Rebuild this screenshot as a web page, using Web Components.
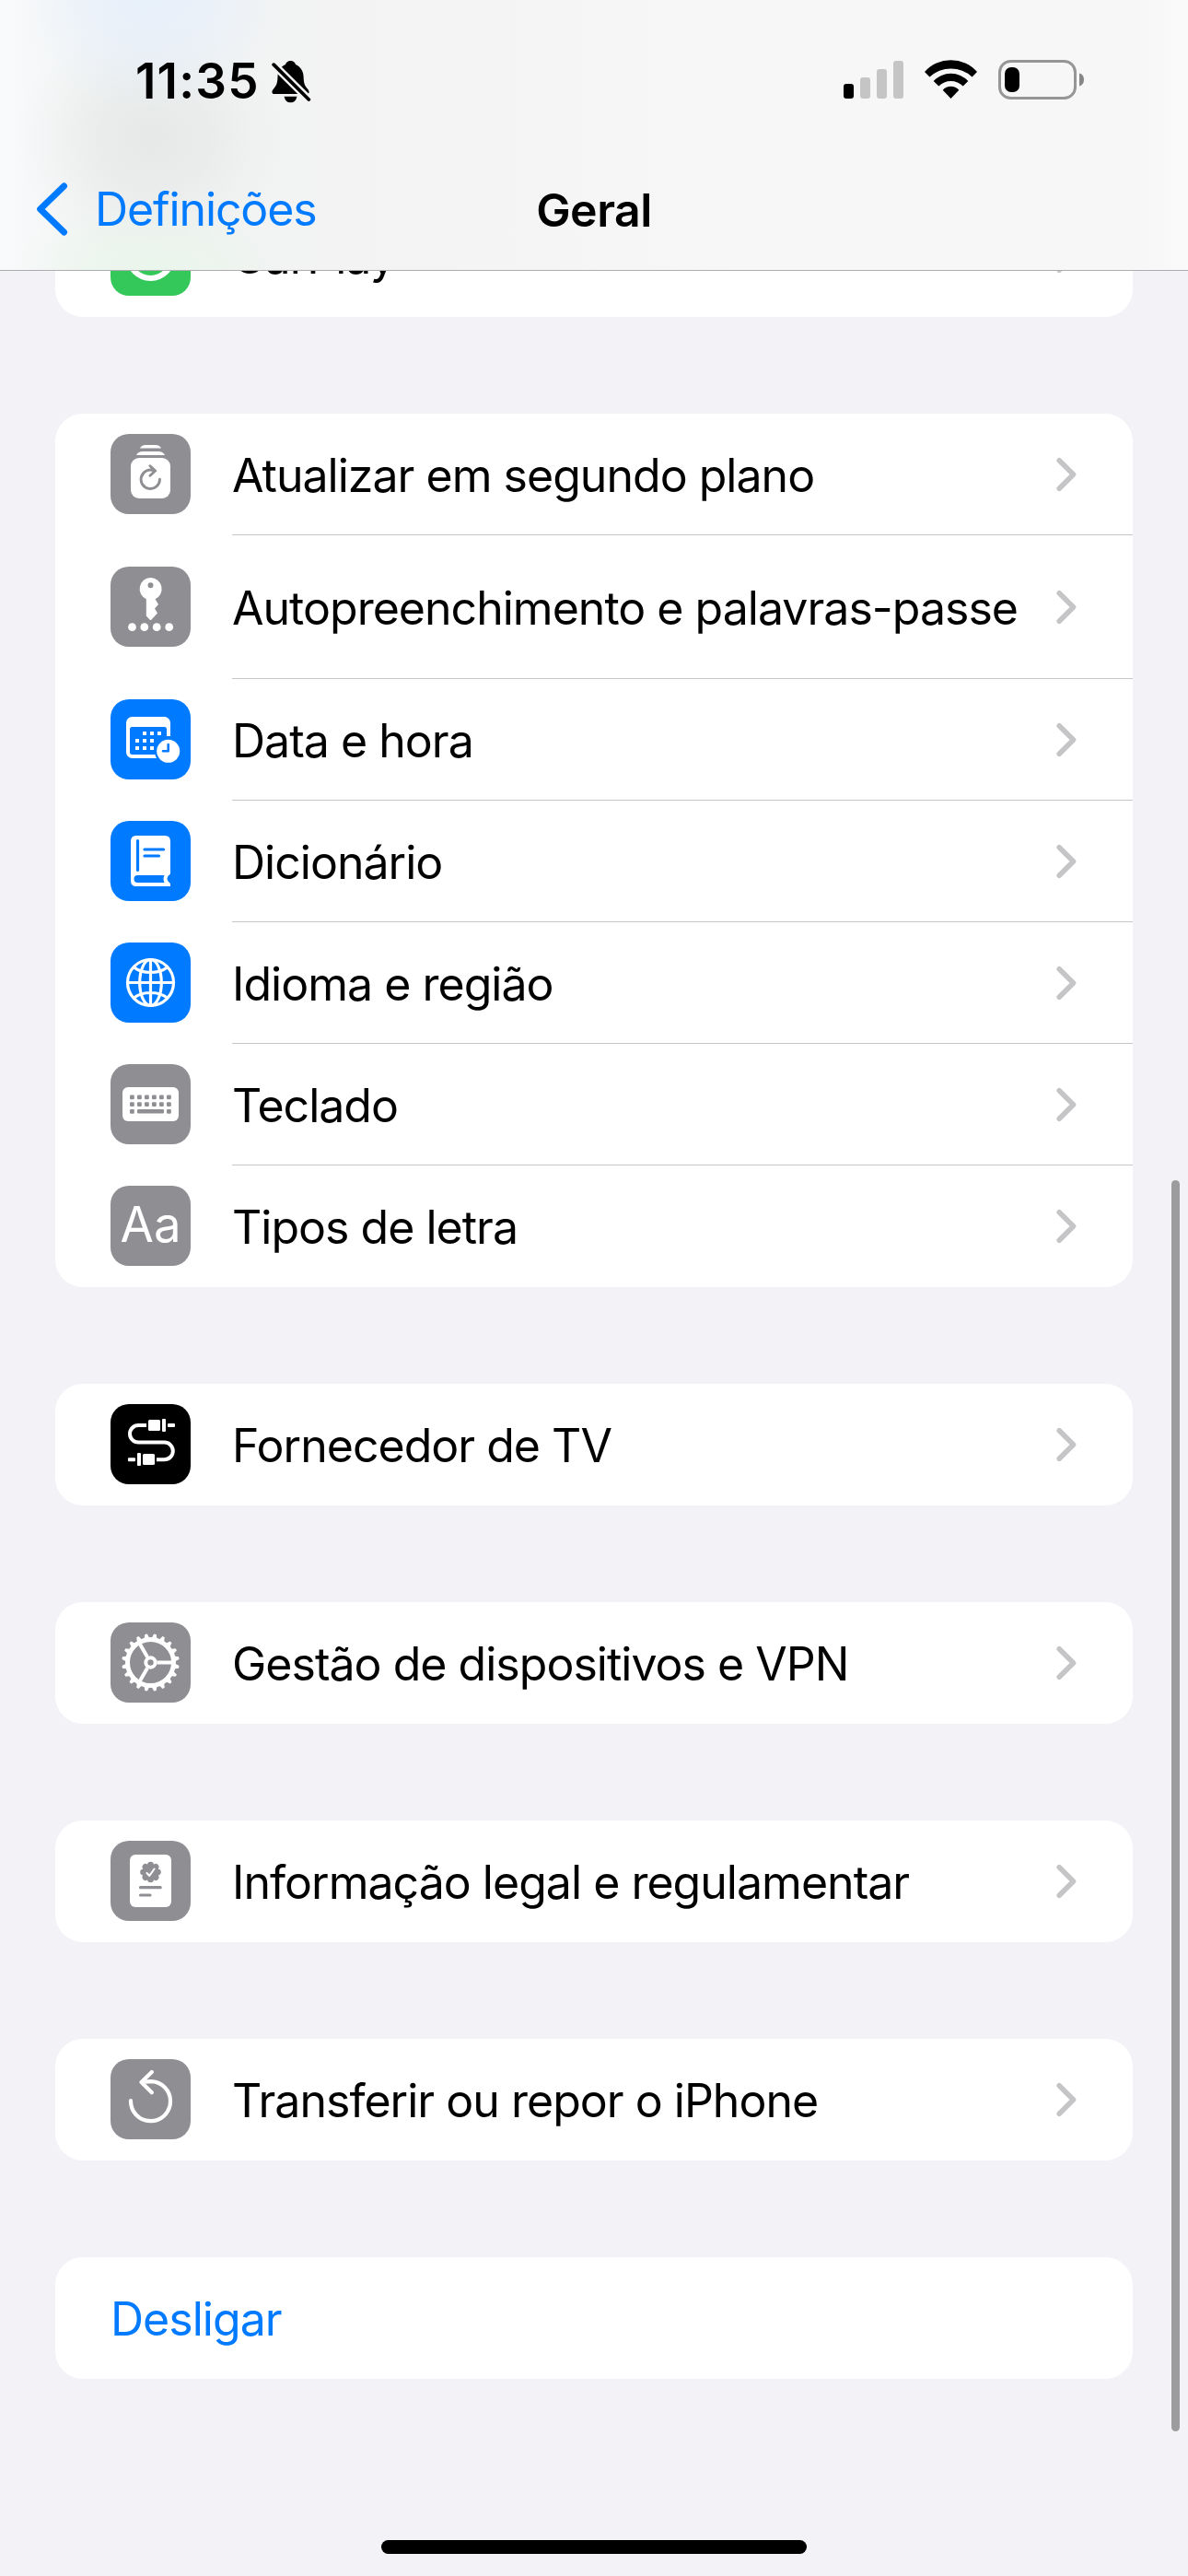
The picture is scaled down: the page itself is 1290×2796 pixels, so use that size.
<!DOCTYPE html>
<html lang="pt">
<head>
<meta charset="utf-8">
<meta name="viewport" content="width=device-width, initial-scale=1">
<title>Geral</title>
<style>
    html, body {
        margin: 0;
        padding: 0;
    }
    body {
        width: 1290px;
        height: 2796px;
        overflow: hidden;
        background: #f2f2f7;
        color: #000;
        font-family: Inter, "Liberation Sans", sans-serif;
        font-size: 50px;
    }
</style>
</head>
<body>
<settings-page>
    <status-bar slot="header" time="11:35"></status-bar>
    <nav-bar slot="header" back="Definições">Geral</nav-bar>

    <settings-group>
        <settings-row icon="carplay" color="#34c759">CarPlay</settings-row>
    </settings-group>
    <settings-group>
        <settings-row icon="refresh">Atualizar em segundo plano</settings-row>
        <settings-row icon="key" class="tall">Autopreenchimento e palavras-passe</settings-row>
        <settings-row icon="calendar" color="#007aff">Data e hora</settings-row>
        <settings-row icon="book" color="#007aff">Dicionário</settings-row>
        <settings-row icon="globe" color="#007aff">Idioma e região</settings-row>
        <settings-row icon="keyboard">Teclado</settings-row>
        <settings-row icon="fonts">Tipos de letra</settings-row>
    </settings-group>
    <settings-group>
        <settings-row icon="cable" color="#000">Fornecedor de TV</settings-row>
    </settings-group>
    <settings-group>
        <settings-row icon="gear">Gestão de dispositivos e VPN</settings-row>
    </settings-group>
    <settings-group>
        <settings-row icon="legal">Informação legal e regulamentar</settings-row>
    </settings-group>
    <settings-group>
        <settings-row icon="reset">Transferir ou repor o iPhone</settings-row>
    </settings-group>
    <settings-group>
        <settings-row class="action">Desligar</settings-row>
    </settings-group>
</settings-page>

<script>
// icon glyphs, all drawn on an 87x87 tile
const icons = {
    carplay: `<circle cx="43.5" cy="44" r="24" fill="none" stroke="#fff" stroke-width="6"/>
        <circle cx="43.5" cy="44" r="18" fill="#34c759"/>`,
    refresh: `<g fill="#fff">
        <path d="M32 15.5Q33.5 12 38 12H49Q53.5 12 55 15.5Z"/>
        <path d="M28 23Q30 19 35 19H52Q57 19 59 23Z"/>
        <rect x="22" y="26" width="43" height="44" rx="9"/></g>
        <path d="M53.5 49.200A10.200 10.200 0 1 1 47.500 40M43 34.800L48.500 40L43 45.200" fill="none" stroke="#8e8e93" stroke-width="2.900" stroke-linecap="round" stroke-linejoin="miter"/>`,
    key: `<path fill="#fff" fill-rule="evenodd" d="M43.500 12A12.200 12.200 0 0 1 48.500 35.300L52 41L48 45.500L51 50.500L44.500 57.500Q43.500 58.700 42.500 57.500L38.800 53.500V35.300A12.200 12.200 0 0 1 43.500 12ZM43.500 17.200A3 3 0 1 0 43.500 23.200A3 3 0 1 0 43.500 17.200Z"/>
        <g fill="#fff"><circle cx="23.500" cy="65.700" r="4.400"/><circle cx="36.800" cy="65.700" r="4.400"/><circle cx="50.200" cy="65.700" r="4.400"/><circle cx="63.700" cy="65.700" r="4.400"/></g>`,
    calendar: `<rect x="17" y="19" width="48" height="45" rx="6.500" fill="#fff"/>
        <path d="M21 32.500Q21 30 23.500 30H58.500Q61 30 61 32.500V60H23.500Q21 60 21 57.500Z" fill="#007aff"/>
        <g fill="#fff"><rect x="35" y="35" width="4" height="4" rx=".6"/><rect x="43" y="35" width="4" height="4" rx=".6"/><rect x="51" y="35" width="4" height="4" rx=".6"/>
        <rect x="27" y="43" width="4" height="4" rx=".6"/><rect x="35" y="43" width="4" height="4" rx=".6"/><rect x="43" y="43" width="4" height="4" rx=".6"/>
        <rect x="27" y="51" width="4" height="4" rx=".6"/><rect x="35" y="51" width="4" height="4" rx=".6"/><rect x="43" y="51" width="4" height="4" rx=".6"/></g>
        <rect x="60" y="40" width="6" height="14" fill="#007aff"/>
        <circle cx="62.700" cy="56.300" r="14.800" fill="#007aff"/><circle cx="62.700" cy="56.300" r="12.500" fill="#fff"/>
        <path d="M62.700 49V56.300H57" fill="none" stroke="#007aff" stroke-width="2.600" stroke-linecap="round" stroke-linejoin="round"/>`,
    book: `<path fill="#fff" d="M28 16H59Q65 16 65 22V57.500Q61.500 60 61.500 62.500Q61.500 65 65 68V71H28Q22 71 22 65V22Q22 16 28 16Z"/>
        <path d="M29.500 59H58.500Q56.500 63 58.500 67H29.500A4 4 0 0 1 29.500 59Z" fill="#007aff"/>
        <path d="M29.500 21.500V53.500M37 31H57.500M37 38H52.500" stroke="#007aff" stroke-width="3.200" stroke-linecap="round"/>`,
    globe: `<g fill="none" stroke="#fff" stroke-width="3.200"><circle cx="43.500" cy="43.500" r="25"/>
        <ellipse cx="43.500" cy="43.500" rx="11.800" ry="25"/><path d="M43.500 18.500V68.500M18.500 43.500H68.500M25.500 27Q32.500 32.500 43.500 32.500T61.500 27M25.500 60Q32.500 54.500 43.500 54.500T61.500 60"/></g>`,
    keyboard: `<rect x="13" y="25" width="61" height="37" rx="6" fill="#fff"/><g fill="#8e8e93">${
        [33.5, 41.2].map(y => [21, 29, 37, 45, 53, 61].map(x => `<rect x="${x}" y="${y}" width="4.800" height="4.800" rx="1.200"/>`).join("")).join("")
        }<rect x="21" y="49" width="4.800" height="4.800" rx="1.200"/><rect x="29" y="49" width="29" height="4.500" rx="1.200"/><rect x="61" y="49" width="4.800" height="4.800" rx="1.200"/></g>`,
    fonts: `<text x="43.500" y="61" text-anchor="middle" fill="#fff" font-size="53" font-weight="400" textLength="66" lengthAdjust="spacingAndGlyphs">Aa</text>`,
    cable: `<path d="M39 23H30.300A9.300 9.300 0 0 0 30.300 41.600H58.500A9.300 9.300 0 0 1 58.500 60.200H50" fill="none" stroke="#fff" stroke-width="4"/>
        <g fill="#fff"><rect x="41" y="17" width="13" height="12" rx="1.500"/><rect x="56" y="16" width="4" height="14" rx="1"/><rect x="62" y="21" width="8" height="4" rx="1"/>
        <rect x="35" y="54" width="13" height="12" rx="1.500"/><rect x="29" y="53" width="4" height="14" rx="1"/><rect x="19" y="58.200" width="8" height="4" rx="1"/></g>`,
    gear: `<g transform="translate(43.500 43.500)"><g fill="#fff">${
        Array.from({length: 20}, (v, i) => `<path d="M-3 -26L-1.300 -31.200H1.300L3 -26Z" transform="rotate(${i * 18 + 9})"/>`).join("")
        }</g><g fill="none" stroke="#fff"><circle r="25" stroke-width="5"/><circle r="5.200" stroke-width="4"/>
        <path d="M7 0H24M-3.500 6.100L-12 20.800M-3.500 -6.100L-12 -20.800" stroke-width="4"/></g></g>`,
    legal: `<rect x="21" y="15" width="45" height="57" rx="6" fill="#fff"/>
        <g fill="#8e8e93" transform="translate(43.500 34)">${
        Array.from({length: 8}, (v, i) => `<circle cx="0" cy="-8" r="3.300" transform="rotate(${i * 45})"/>`).join("")
        }<circle r="9.200"/></g>
        <path d="M39.500 35L42.300 38L47.500 30.500" fill="none" stroke="#fff" stroke-width="2" stroke-linecap="round" stroke-linejoin="round"/>
        <path d="M32.500 50.700H54.200M32.500 59H43" stroke="#8e8e93" stroke-width="3.200" stroke-linecap="round"/>`,
    reset: `<path d="M22 45A21.500 21.500 0 1 0 43.500 24.200L34 24.800M44.800 14L33.500 25L44.800 36.200" fill="none" stroke="#fff" stroke-width="4.200" stroke-linecap="round" stroke-linejoin="round"/>`
};

// page: fixed header over the scrolled list
const template_page = document.createElement("template");
template_page.innerHTML = `
    <div class="header"><slot name="header"></slot></div>
    <div class="list"><slot></slot></div>
    <div class="scroll"></div>
    <div class="home"></div>
    <style>
        :host {
            display: block;
            position: relative;
            width: 1290px;
            height: 2796px;
            overflow: hidden;
        }
        .header {
            position: relative;
            z-index: 1;
            box-sizing: border-box;
            height: 294px;
            border-bottom: 1px solid #adadaf;
            background:
                radial-gradient(ellipse 150px 120px at 165px 0, #e5effccc 0%, #e5effc99 40%, #e5effc33 75%, #e5effc00 100%),
                radial-gradient(ellipse 150px 130px at 165px 150px, #e3e6e5cc 0%, #e3e6e588 40%, #e3e6e52a 75%, #e3e6e500 100%),
                radial-gradient(ellipse 150px 80px at 165px 293px, #e8f6eacc 0%, #e8f6ea88 45%, #e8f6ea00 100%),
                linear-gradient(90deg, #f9fafb 0, #f1f3f3 130px, #f3f3f3 400px, #f7f7f7 800px, #f7f7f7 1240px, #fafafa 1290px);
        }
        .list {
            display: flex;
            flex-direction: column;
            gap: 105px;
            margin-top: -82px;
            padding: 0 60px;
        }
        .scroll {
            position: absolute;
            right: 9px;
            top: 1281px;
            width: 9px;
            height: 1358px;
            border-radius: 5px;
            background: #9c9c9f;
        }
        .home {
            position: absolute;
            left: 414px;
            bottom: 24px;
            width: 462px;
            height: 15px;
            border-radius: 8px;
            background: #000;
        }
    </style>
`;

class SettingsPage extends HTMLElement {
    constructor(){
        super();
        this.attachShadow({mode:"open"});
    }
    connectedCallback(){
        this.shadowRoot.appendChild(template_page.content.cloneNode(true));
    }
}
customElements.define("settings-page", SettingsPage);

// status bar
const template_status = document.createElement("template");
template_status.innerHTML = `
    <span class="time"></span>
    <svg class="bell" width="44" height="46" viewBox="0 0 44 46">
        <mask id="cut"><rect width="44" height="46" fill="#fff"/><path d="M-2 0L44 45.500" stroke="#000" stroke-width="8.600"/></mask>
        <g mask="url(#cut)">
            <path d="M20.500 0C23.500 0 25.500 1.800 26 4C31.500 6.500 34.300 11 34.600 17C34.800 25 36 27 39 30.500C41.500 33.500 41 36 38 36H3C0 36 -.5 33.500 2 30.500C5 27 6.300 25 6.500 17C6.800 11 9.500 6.500 15 4C15.500 1.800 17.500 0 20.500 0Z"/>
            <path d="M13.500 38.700H27.500Q26 45.300 20.500 45.300T13.500 38.700Z"/>
        </g>
        <path d="M2.200 4.200L40.300 42" stroke="#000" stroke-width="3.800" stroke-linecap="round"/>
    </svg>
    <svg class="signal" width="65" height="44" viewBox="0 0 65 44">
        <rect x="0" y="26" width="11" height="16" rx="3"/>
        <g fill="#c5c5c5"><rect x="18" y="19" width="11" height="23" rx="3"/><rect x="36" y="10" width="11" height="32" rx="3"/><rect x="54" y="1" width="11" height="41" rx="3"/></g>
    </svg>
    <svg class="wifi" width="57" height="44" viewBox="0 0 57 44">
        <path d="M0 13A38 38 0 0 1 57 13L51.500 18.500A34 34 0 0 0 5.500 18.500Z"/>
        <path d="M9.700 23A25.500 25.500 0 0 1 47.300 23L41.700 28.500A18.600 18.600 0 0 0 15.300 28.500Z"/>
        <path d="M19.700 32.700A11.700 11.700 0 0 1 37.300 32.700L28.500 42Z"/>
    </svg>
    <svg class="battery" width="93" height="44" viewBox="0 0 93 44">
        <rect x="1.500" y="1.500" width="82" height="40" rx="12" fill="none" stroke="#969696" stroke-width="3"/>
        <rect x="7" y="8" width="16" height="27" rx="7"/>
        <path d="M88 14.500Q93 16 93 21.500T88 28.500Z" fill="#868686"/>
    </svg>
    <style>
        :host {
            display: flex;
            align-items: center;
            box-sizing: border-box;
            height: 174px;
            padding: 0 113px 0 147px;
        }
        .time {
            padding-top: 2px;
            font-size: 53px;
            font-weight: 600;
            letter-spacing: 1.2px;
        }
        .bell {
            margin: 3px 0 0 13px;
        }
        .signal { margin-left: auto; }
        .wifi { margin-left: 23px; }
        .battery { margin-left: 23px; }
    </style>
`;

class StatusBar extends HTMLElement {
    constructor(){
        super();
        this.attachShadow({mode:"open"});
    }
    connectedCallback(){
        this.shadowRoot.appendChild(template_status.content.cloneNode(true));
        this.shadowRoot.querySelector(".time").innerText = this.getAttribute("time");
    }
}
customElements.define("status-bar", StatusBar);

// navigation bar
const template_nav = document.createElement("template");
template_nav.innerHTML = `
    <div class="back">
        <svg width="34" height="58" viewBox="0 0 34 58"><path d="M29.500 4L3.700 29L29.500 54" fill="none" stroke="#007aff" stroke-width="7" stroke-linecap="round" stroke-linejoin="round"/></svg>
        <span></span>
    </div>
    <div class="title"><slot></slot></div>
    <style>
        :host {
            display: grid;
            grid-template-columns: 1fr auto 1fr;
            align-items: center;
            height: 106px;
        }
        .back {
            display: flex;
            align-items: center;
            gap: 29px;
            padding-left: 40px;
            color: #007aff;
            letter-spacing: -1.1px;
        }
        .title {
            padding-top: 1px;
            font-weight: 600;
            letter-spacing: -0.5px;
        }
    </style>
`;

class NavBar extends HTMLElement {
    constructor(){
        super();
        this.attachShadow({mode:"open"});
    }
    connectedCallback(){
        this.shadowRoot.appendChild(template_nav.content.cloneNode(true));
        this.shadowRoot.querySelector(".back > span").innerText = this.getAttribute("back");
    }
}
customElements.define("nav-bar", NavBar);

// white rounded card that holds the rows
const template_group = document.createElement("template");
template_group.innerHTML = `
    <slot></slot>
    <style>
        :host {
            display: flex;
            flex-direction: column;
            border-radius: 30px;
            background: #fff;
            overflow: hidden;
        }
        ::slotted(settings-row:not(:last-child)) {
            --line: #c6c6c8;
        }
    </style>
`;

class SettingsGroup extends HTMLElement {
    constructor(){
        super();
        this.attachShadow({mode:"open"});
    }
    connectedCallback(){
        this.shadowRoot.appendChild(template_group.content.cloneNode(true));
    }
}
customElements.define("settings-group", SettingsGroup);

// one row: icon, label, chevron
const template_row = document.createElement("template");
template_row.innerHTML = `
    <div class="icon"></div>
    <div class="content">
        <span class="label"><slot></slot></span>
        <svg class="chevron" width="22" height="38" viewBox="0 0 22 38"><path d="M3.200 3.700L18.500 19L3.200 34.300" fill="none" stroke="#c5c5c7" stroke-width="5.600" stroke-linecap="round" stroke-linejoin="round"/></svg>
    </div>
    <style>
        :host {
            display: flex;
            align-items: center;
            height: 132px;
            padding-left: 60px;
        }
        :host(.tall) {
            height: 156px;
        }
        .icon {
            width: 87px;
            height: 87px;
            margin: 0 45px 1px 0;
            border-radius: 20px;
            overflow: hidden;
        }
        .icon svg {
            display: block;
        }
        .content {
            flex: 1;
            display: flex;
            align-items: center;
            justify-content: space-between;
            box-sizing: border-box;
            height: 100%;
            padding-right: 61px;
            border-bottom: 1px solid var(--line, transparent);
        }
        .label {
            padding-top: 2px;
            white-space: nowrap;
            letter-spacing: -0.98px;
        }
        :host(.action) {
            color: #007aff;
        }
        :host(.action) .icon,
        :host(.action) .chevron {
            display: none;
        }
    </style>
`;

class SettingsRow extends HTMLElement {
    constructor(){
        super();
        this.attachShadow({mode:"open"});
    }
    connectedCallback(){
        this.shadowRoot.appendChild(template_row.content.cloneNode(true));
        if(this.getAttribute("icon")) {
            const tile = this.shadowRoot.querySelector(".icon");
            tile.style.background = this.getAttribute("color") || "#8e8e93";
            tile.innerHTML = `<svg width="87" height="87" viewBox="0 0 87 87">${icons[this.getAttribute("icon")]}</svg>`;
        }
    }
}
customElements.define("settings-row", SettingsRow);
</script>
</body>
</html>
